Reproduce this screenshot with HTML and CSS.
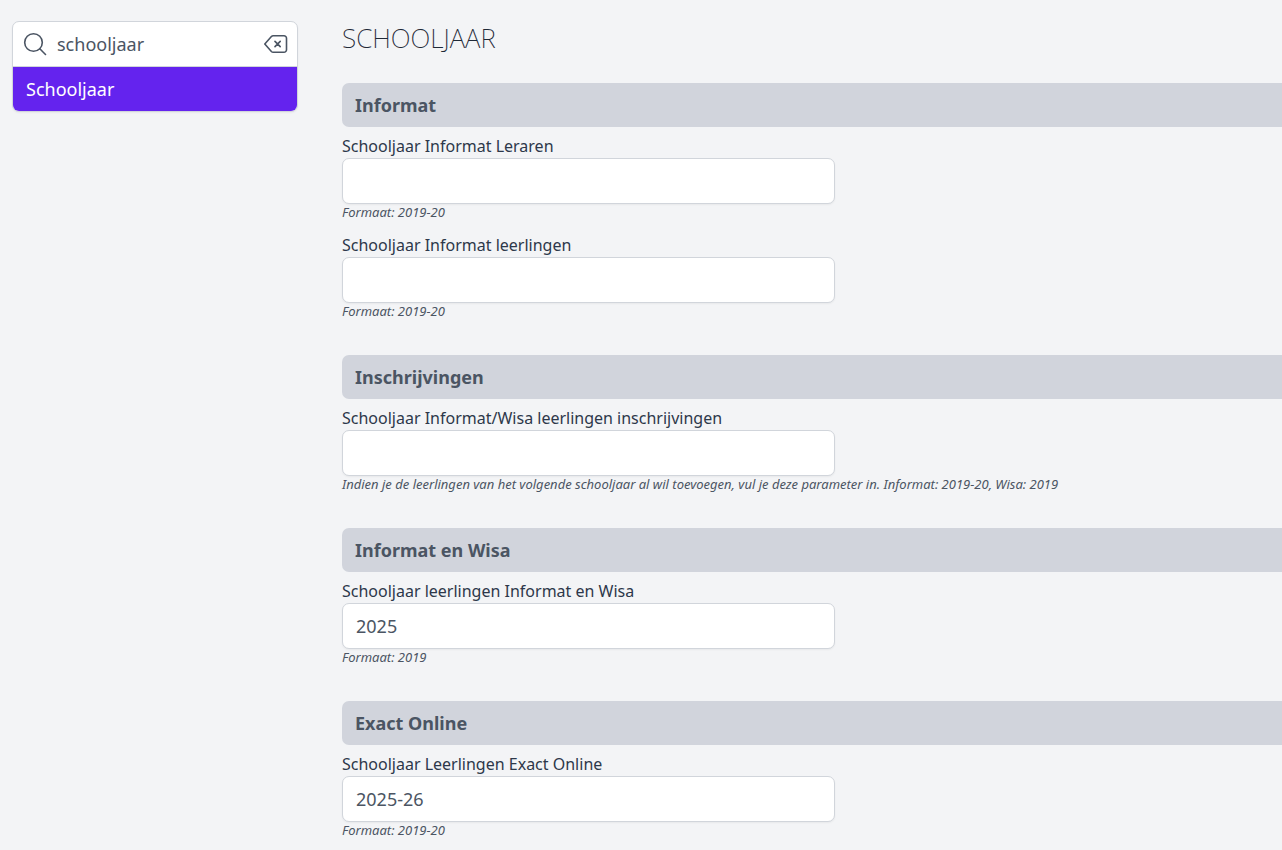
FILE: index.html
```html
<!DOCTYPE html>
<html lang="nl">
<head>
<meta charset="utf-8">
<meta name="viewport" content="width=device-width, initial-scale=1">
<title>Schooljaar</title>
<link rel="stylesheet" href="styles.css">
</head>
<body>
<div class="layout">
  <aside class="sidebar">
    <nav class="menu" aria-label="Instellingen">
      <div class="search">
        <svg class="icon" viewBox="0 0 24 24" aria-hidden="true"><circle cx="10.5" cy="10.5" r="8.8"/><path d="M16.8 16.8l5.700 5.700"/></svg>
        <input class="search-input" type="text" value="schooljaar" aria-label="Zoeken">
        <button class="clear" type="button" aria-label="Wissen">
          <svg class="icon" viewBox="0 0 24 24" aria-hidden="true"><path d="M9.2 3.8H20a2.500 2.500 0 0 1 2.500 2.500v11.400a2.500 2.500 0 0 1-2.500 2.500H9.200a2.500 2.500 0 0 1-1.800-.75L.8 12l6.600-7.450a2.500 2.500 0 0 1 1.800-.75zM11 9.400l5.200 5.200M16.200 9.400l-5.200 5.200"/></svg>
        </button>
      </div>
      <a class="menu-item" href="#schooljaar">Schooljaar</a>
    </nav>
  </aside>
  <main class="content" id="schooljaar">
    <h1 class="title">SCHOOLJAAR</h1>
    <form class="sections">
      <section class="section">
        <h2 class="section-title">Informat</h2>
        <div class="fields">
          <div class="field">
            <label class="label" for="leraren">Schooljaar Informat Leraren</label>
            <input class="input" id="leraren" type="text">
            <p class="hint">Formaat: 2019-20</p>
          </div>
          <div class="field">
            <label class="label" for="leerlingen">Schooljaar Informat leerlingen</label>
            <input class="input" id="leerlingen" type="text">
            <p class="hint">Formaat: 2019-20</p>
          </div>
        </div>
      </section>
      <section class="section">
        <h2 class="section-title">Inschrijvingen</h2>
        <div class="field">
          <label class="label" for="inschrijvingen">Schooljaar Informat/Wisa leerlingen inschrijvingen</label>
          <input class="input" id="inschrijvingen" type="text">
          <p class="hint">Indien je de leerlingen van het volgende schooljaar al wil toevoegen, vul je deze parameter in. Informat: 2019-20, Wisa: 2019</p>
        </div>
      </section>
      <section class="section">
        <h2 class="section-title">Informat en Wisa</h2>
        <div class="field">
          <label class="label" for="wisa">Schooljaar leerlingen Informat en Wisa</label>
          <input class="input" id="wisa" type="text" value="2025">
          <p class="hint">Formaat: 2019</p>
        </div>
      </section>
      <section class="section">
        <h2 class="section-title">Exact Online</h2>
        <div class="field">
          <label class="label" for="exact">Schooljaar Leerlingen Exact Online</label>
          <input class="input" id="exact" type="text" value="2025-26">
          <p class="hint">Formaat: 2019-20</p>
        </div>
      </section>
    </form>
  </main>
</div>
</body>
</html>
```
FILE: styles.css
```css
* {
  box-sizing: border-box;
}

body {
  margin: 0;
  background: #f3f4f6;
  color: #4b5563;
  font-family: "Noto Sans", sans-serif;
  font-size: 18px;
}

.layout {
  display: flex;
  gap: 44px;
  padding: 21px 0 8px 12px;
}

.sidebar {
  flex: 0 0 286px;
  min-width: 0;
}

.menu {
  overflow: hidden;
  border: 1px solid #d1d5db;
  border-radius: 7px;
  background: #fff;
  box-shadow: 0 1px 2px rgb(0 0 0 / 5%);
}

.search {
  display: flex;
  align-items: center;
  gap: 10px;
  height: 45px;
  padding: 0 9px 0 10px;
  border-bottom: 1px solid #d1d5db;
}

.icon {
  display: block;
  flex: none;
  width: 24px;
  height: 24px;
  fill: none;
  stroke: #4b5563;
  stroke-width: 1.6;
  stroke-linecap: round;
  stroke-linejoin: round;
}

.search-input {
  flex: 1;
  width: 0;
  min-width: 0;
  padding: 0;
  border: 0;
  outline: 0;
  background: transparent;
  color: #4b5563;
  font: inherit;
}

.clear {
  padding: 0;
  border: 0;
  background: none;
  cursor: pointer;
}

.menu-item {
  display: block;
  padding: 0 13px;
  background: #6423ee;
  color: #fff;
  line-height: 44px;
  text-decoration: none;
}

.content {
  flex: 1;
  min-width: 0;
}

.title {
  margin: 0 0 28px;
  color: #1f2937;
  font-size: 26px;
  font-weight: 200;
  line-height: 34px;
}

.sections {
  display: flex;
  flex-direction: column;
  gap: 36px;
}

.section {
  display: flex;
  flex-direction: column;
  gap: 9px;
}

.section-title {
  margin: 0;
  padding: 0 13px;
  border-radius: 7px 0 0 7px;
  background: #d1d4dc;
  font-size: 18px;
  font-weight: 700;
  line-height: 44px;
}

.fields {
  display: flex;
  flex-direction: column;
  gap: 15px;
}

.field {
  display: flex;
  flex-direction: column;
}

.label {
  padding-bottom: 2px;
  color: #2d384a;
  font-size: 16px;
  line-height: 20px;
}

.input {
  width: 100%;
  max-width: 493px;
  height: 46px;
  padding: 0 13px;
  border: 1px solid #d1d5db;
  border-radius: 7px;
  background: #fff;
  box-shadow: 0 1px 2px rgb(0 0 0 / 5%);
  color: #4b5563;
  font: inherit;
}

.hint {
  margin: 0;
  font-size: 13px;
  font-style: italic;
  line-height: 16px;
}
```
